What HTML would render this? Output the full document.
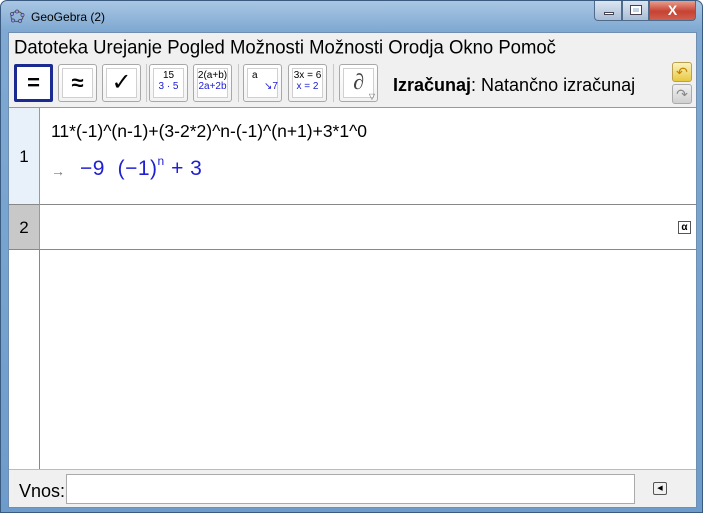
<!DOCTYPE html>
<html><head><style>
*{margin:0;padding:0;box-sizing:border-box}
body{width:703px;height:513px;overflow:hidden;font-family:"Liberation Sans",sans-serif;background:#fff}
.win{position:absolute;left:0;top:0;width:703px;height:513px;background:linear-gradient(180deg,#a9c6e3 0,#7fa9d2 30px,#6d9ccc 100%);border:1px solid #3a5a80;border-radius:7px 7px 0 0}
.title{position:absolute;left:30px;top:9px;font-size:12px;color:#000}
.ctl{position:absolute;top:0;height:20px;border:1px solid #4e6b8c;border-top:none}
.inner{position:absolute;left:7px;top:31px;width:689px;height:476px;background:#f0f0f0;border:1px solid #6f8eb0}
.menu{position:absolute;left:5px;top:3px;font-size:18.5px;color:#000;transform:scaleY(1.05)}
.btn{position:absolute;top:31px;width:39px;height:38px;background:linear-gradient(#fff,#f2f2f2);border:1px solid #a8a8a8;border-radius:3px;text-align:center}
.btn .in{position:absolute;left:3px;top:3px;right:3px;bottom:3px;background:#fff;border:1px solid #d0d0d0}
.sep{position:absolute;top:31px;width:1px;height:38px;background:#c8c8c8}
.small{font-size:10px;line-height:11px;margin-top:5px}
.blue{color:#2020d0}
</style></head><body>
<div class="win">
 <svg style="position:absolute;left:8px;top:7px" width="16" height="16" viewBox="0 0 16 16"><ellipse cx="8" cy="8.5" rx="6" ry="5" fill="none" stroke="#555" stroke-width="1"/><circle cx="3" cy="6" r="1.6" fill="#99f" stroke="#333" stroke-width=".6"/><circle cx="8" cy="3.5" r="1.6" fill="#99f" stroke="#333" stroke-width=".6"/><circle cx="13.5" cy="7" r="1.6" fill="#99f" stroke="#333" stroke-width=".6"/><circle cx="11" cy="13" r="1.6" fill="#99f" stroke="#333" stroke-width=".6"/><circle cx="4" cy="12.5" r="1.6" fill="#99f" stroke="#333" stroke-width=".6"/></svg>
 <div class="title">GeoGebra (2)</div>
 <div class="ctl" style="left:593px;width:28px;background:linear-gradient(#dbe6f3,#a9bdd6);border-radius:0 0 0 4px"><div style="position:absolute;left:9px;top:11px;width:10px;height:3px;background:#fff;border:1px solid #445"></div></div>
 <div class="ctl" style="left:621px;width:27px;background:linear-gradient(#dbe6f3,#a9bdd6)"><div style="position:absolute;left:8px;top:5px;width:10px;height:8px;border:2px solid #fff;outline:1px solid #445"></div></div>
 <div class="ctl" style="left:648px;width:47px;background:linear-gradient(#e8a090,#c74232 55%,#d06050);border-radius:0 0 4px 0;color:#fff;font-weight:bold;font-size:14px;text-align:center;line-height:18px">X</div>
 <div class="inner">
  <div class="menu">Datoteka Urejanje Pogled Možnosti Možnosti Orodja Okno Pomoč</div>
  <div class="btn" style="left:5px;border:3px solid #1a2a90;border-radius:2px;background:#fff"><div style="font-size:22px;font-weight:bold;line-height:32px">=</div></div>
  <div class="btn" style="left:49px"><div class="in"></div><div style="position:relative;font-size:22px;font-weight:bold;line-height:36px">≈</div></div>
  <div class="btn" style="left:93px"><div class="in"></div><div style="position:relative;font-size:24px;line-height:36px">✓</div></div>
  <div class="sep" style="left:137px"></div>
  <div class="btn" style="left:140px"><div class="in"></div><div class="small" style="position:relative">15<br><span class="blue">3 · 5</span></div></div>
  <div class="btn" style="left:184px"><div class="in"></div><div class="small" style="position:relative">2(a+b)<br><span class="blue">2a+2b</span></div></div>
  <div class="sep" style="left:229px"></div>
  <div class="btn" style="left:234px"><div class="in"></div><div class="small" style="position:relative;text-align:left;padding-left:8px">a<br><span class="blue" style="padding-left:12px">↘7</span></div></div>
  <div class="btn" style="left:279px"><div class="in"></div><div class="small" style="position:relative">3x = 6<br><span class="blue">x = 2</span></div></div>
  <div class="sep" style="left:324px"></div>
  <div class="btn" style="left:330px"><div class="in"></div><div style="position:relative;font-family:'Liberation Serif',serif;font-size:22px;line-height:34px;color:#444">∂</div><div style="position:absolute;right:2px;bottom:0;font-size:8px;color:#666">▽</div></div>
  <div style="position:absolute;left:384px;top:42px;font-size:18px"><b>Izračunaj</b>: Natančno izračunaj</div>
  <div style="position:absolute;left:663px;top:29px;width:20px;height:20px;background:linear-gradient(#fbf3c0,#e8c840);border:1px solid #b9a050;border-radius:3px;color:#c08000;font-size:14px;text-align:center;line-height:18px">↶</div>
  <div style="position:absolute;left:663px;top:51px;width:20px;height:20px;background:linear-gradient(#f0f0f0,#d0d0d0);border:1px solid #aaa;border-radius:3px;color:#888;font-size:14px;text-align:center;line-height:18px">↷</div>
  <div style="position:absolute;left:0;top:74px;width:687px;height:362px;background:#fff;border-top:1px solid #999">
   <div style="position:absolute;left:0;top:0;width:31px;height:97px;background:#e8f0fa;border-right:1px solid #999;border-bottom:1px solid #888;font-size:17px;text-align:center;line-height:97px">1</div>
   <div style="position:absolute;left:31px;top:96px;width:656px;height:1px;background:#888"></div>
   <div style="position:absolute;left:42px;top:13px;font-size:17.5px">11*(-1)^(n-1)+(3-2*2)^n-(-1)^(n+1)+3*1^0</div>
   <div style="position:absolute;left:42px;top:55px;font-size:14px;color:#777">→</div>
   <div style="position:absolute;left:71px;top:46px;font-size:21px;color:#2020d0;letter-spacing:0.5px">−9 &nbsp;(−1)<sup style="font-size:12px;vertical-align:10px">n</sup> + 3</div>
   <div style="position:absolute;left:0;top:97px;width:31px;height:45px;background:#c8c8c8;border-right:1px solid #999;border-bottom:1px solid #888;font-size:17px;text-align:center;line-height:45px">2</div>
   <div style="position:absolute;left:31px;top:141px;width:656px;height:1px;background:#888"></div>
   <div style="position:absolute;left:669px;top:113px;width:13px;height:13px;border:1px solid #555;font-size:10px;font-weight:bold;text-align:center;line-height:11px">α</div>
   <div style="position:absolute;left:30px;top:142px;width:1px;height:220px;background:#888"></div>
  </div>
  <div style="position:absolute;left:0;top:436px;width:687px;height:1px;background:#bbb"></div>
  <div style="position:absolute;left:10px;top:448px;font-size:18px">Vnos:</div>
  <div style="position:absolute;left:57px;top:441px;width:569px;height:30px;background:#fff;border:1px solid #aaa"></div>
  <div style="position:absolute;left:644px;top:449px;width:14px;height:13px;border:1px solid #555;border-radius:2px;font-size:7px;text-align:center;line-height:11px">◀</div>
 </div>
</div>
</body></html>
